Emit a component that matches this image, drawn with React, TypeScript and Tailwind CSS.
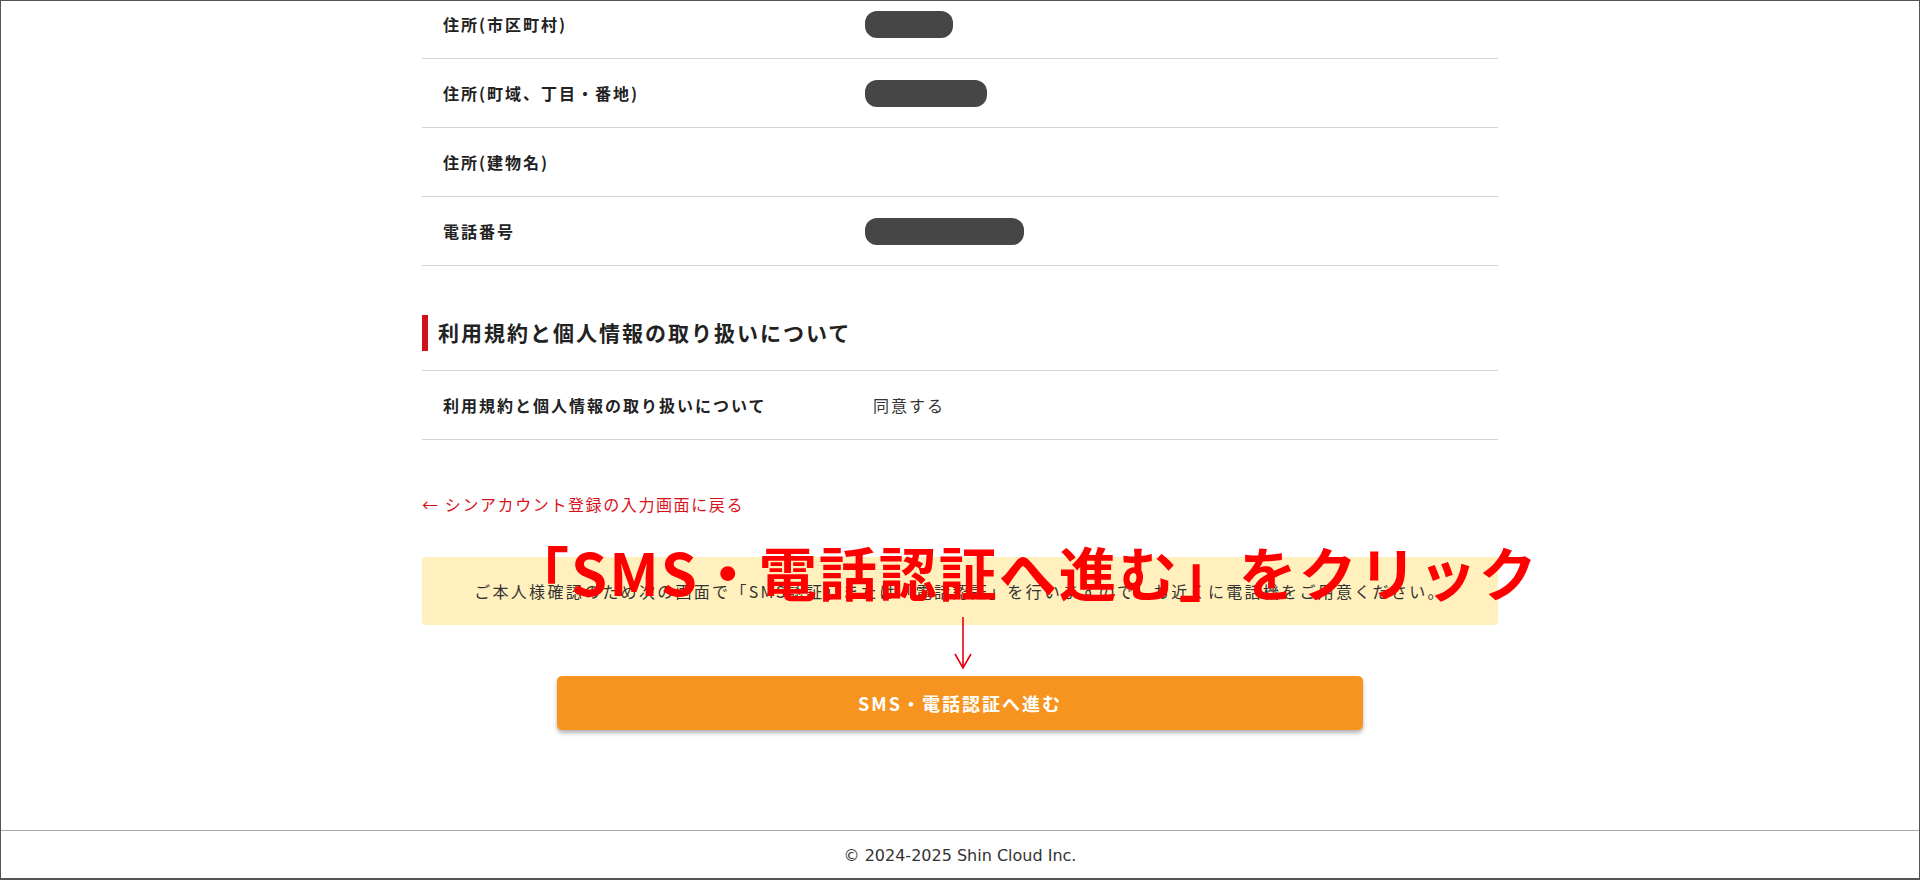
const jp = "font-['Noto_Sans_CJK_JP','Noto_Sans',sans-serif]";

type Row = { label: string; pill?: number };

const addressRows: Row[] = [
  { label: "住所(市区町村)", pill: 88 },
  { label: "住所(町域、丁目・番地)", pill: 122 },
  { label: "住所(建物名)" },
  { label: "電話番号", pill: 159 },
];

function InfoRow({ label, children }: { label: string; children?: React.ReactNode }) {
  return (
    <div className="flex items-center h-[69px] border-b border-[#d4d4d4]">
      <div className="w-[430px] pl-[21px] font-bold text-[#222]">{label}</div>
      <div className="pl-[21px] text-[#333]">{children}</div>
    </div>
  );
}

export default function App() {
  return (
    <div className={`relative h-[880px] flex flex-col border border-[#555] border-b-2 overflow-hidden bg-white ${jp} text-[16px] tracking-[2px]`}>
      <div className="flex-1">
        <div className="w-[1076px] mx-auto mt-[-11px]">
          {/* address table (redacted values) */}
          {addressRows.map((r) => (
            <InfoRow key={r.label} label={r.label}>
              {r.pill ? (
                <div className="-ml-[8px] h-[27px] rounded-[12px] bg-[#464646]" style={{ width: r.pill }} />
              ) : null}
            </InfoRow>
          ))}

          <h2 className="mt-[49px] h-[36px] flex items-center border-l-[6px] border-[#d0101b] pl-[10px] text-[21px] font-bold text-[#222]">
            利用規約と個人情報の取り扱いについて
          </h2>

          <div className="mt-[19px] border-t border-[#d4d4d4]">
            <InfoRow label="利用規約と個人情報の取り扱いについて">同意する</InfoRow>
          </div>

          <a href="#" className="block mt-[52px] leading-[24px] text-[#d7121b] tracking-[1.6px] w-fit">
            ← シンアカウント登録の入力画面に戻る
          </a>

          <div className="mt-[41px] h-[68px] rounded-[3px] bg-[#fff0bd] flex items-center justify-center text-[#333] tracking-[2.3px]">
            ご本人様確認のため次の画面で「SMS認証」または「電話認証」を行いますので、お近くに電話機をご用意ください。
          </div>

          <div className="mt-[51px] flex justify-center">
            <button className="w-[806px] h-[54px] rounded-[5px] bg-[#f7941f] text-white font-bold text-[18px] shadow-[0_3px_4px_rgba(0,0,0,0.3)]">
              SMS・電話認証へ進む
            </button>
          </div>
        </div>
      </div>

      <footer className="h-[48px] pt-[2px] border-t border-[#aaa] flex items-center justify-center font-['DejaVu_Sans',sans-serif] text-[16px] tracking-normal text-[#333]">
        © 2024-2025 Shin Cloud Inc.
      </footer>

      {/* annotation overlay */}
      <div className="absolute left-[510px] top-[541px] leading-none text-[58px] font-bold tracking-[2px] text-[#ff0000] whitespace-nowrap">
        「SMS・電話認証へ進む」をクリック
      </div>
      <svg className="absolute left-[951px] top-[615px]" width="22" height="54" viewBox="0 0 22 54">
        <path d="M11 1 V52 M3 38 L11 52 L19 38" fill="none" stroke="#e60012" strokeWidth="1.6" />
      </svg>
    </div>
  );
}
